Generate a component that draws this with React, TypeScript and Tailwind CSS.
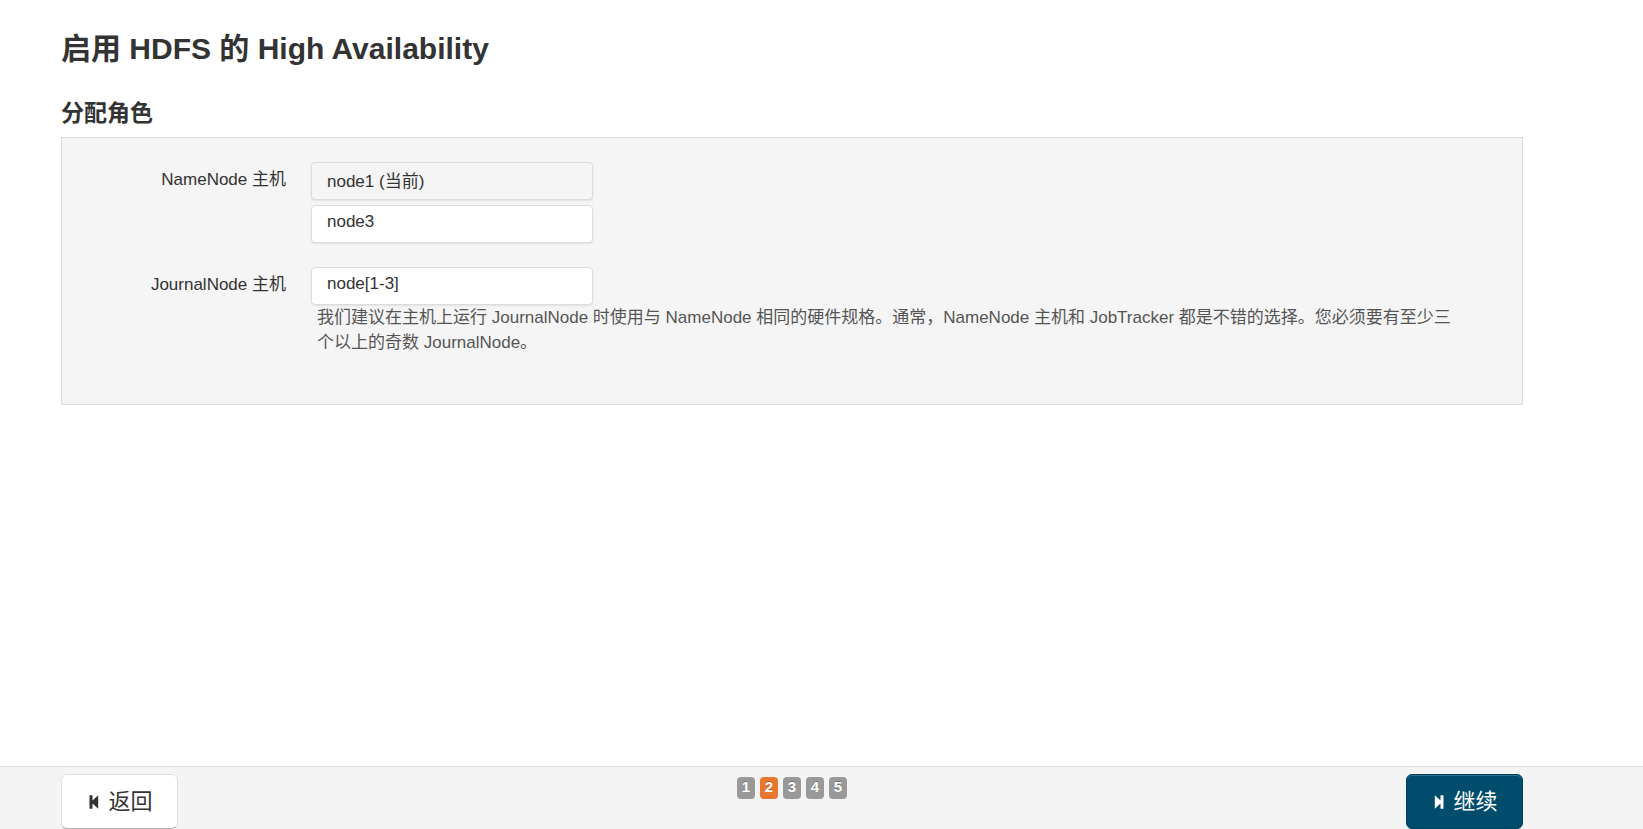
const STEPS = [1, 2, 3, 4, 5];
const CURRENT_STEP = 2;

const FIELD =
  'block h-[38px] w-[282px] max-w-full rounded-[4px] border border-[#dcdcdc] px-[15px] pb-1 text-[17px] text-[#333] shadow-[0_1px_2px_rgba(0,0,0,0.08)] outline-none';

function StepBackwardIcon() {
  return (
    <svg className="h-4 w-[10px] shrink-0" viewBox="0 0 10 16" fill="currentColor" aria-hidden="true">
      <path d="M0.5 1.2h3v5.2L9.2 1.2v13.6L3.5 9.6v5.2h-3z" />
    </svg>
  );
}

function StepForwardIcon() {
  return (
    <svg className="h-4 w-[10px] shrink-0" viewBox="0 0 10 16" fill="currentColor" aria-hidden="true">
      <path d="M9.5 1.2h-3v5.2L0.8 1.2v13.6l5.7-5.2v5.2h3z" />
    </svg>
  );
}

export default function App() {
  return (
    <div className="flex min-h-screen flex-col bg-white font-['Liberation_Sans','Noto_Sans_CJK_SC',sans-serif] text-[17px] text-[#333]">
      <main className="pl-[61px] pr-[120px] pt-[29px]">
        <h1 className="text-[30px] font-bold leading-[40px]">启用 HDFS 的 High Availability</h1>
        <h2 className="mt-[28px] text-[23px] font-bold leading-[32px]">分配角色</h2>

        <form
          id="roles"
          className="mt-[8px] flex flex-col gap-[24px] border border-[#dcdcdc] bg-[#f5f5f5] pb-[49px] pt-[24px]"
        >
          <div className="flex gap-[25px]">
            <label htmlFor="namenode-current" className="w-[224px] shrink-0 pt-[5px] text-right leading-[25px]">
              NameNode 主机
            </label>
            <div className="flex min-w-0 flex-1 flex-col gap-[5px]">
              <input id="namenode-current" className={`${FIELD} bg-[#f5f5f5]`} defaultValue="node1 (当前)" readOnly />
              <input
                id="namenode-standby"
                aria-label="NameNode 主机"
                className={`${FIELD} bg-white`}
                defaultValue="node3"
              />
            </div>
          </div>

          <div className="flex gap-[25px]">
            <label htmlFor="journalnode" className="w-[224px] shrink-0 pt-[5px] text-right leading-[25px]">
              JournalNode 主机
            </label>
            <div className="min-w-0 flex-1">
              <input id="journalnode" className={`${FIELD} bg-white`} defaultValue="node[1-3]" />
              <p className="pl-[6px] pr-[58px] leading-[25px] text-[#555]">
                我们建议在主机上运行 JournalNode 时使用与 NameNode 相同的硬件规格。通常，NameNode 主机和 JobTracker
                都是不错的选择。您必须要有至少三个以上的奇数 JournalNode。
              </p>
            </div>
          </div>
        </form>
      </main>

      <footer className="mt-auto flex items-start justify-between border-t border-[#dcdcdc] bg-[#f4f4f4] pl-[61px] pr-[120px] pt-[7px]">
        <button
          type="button"
          className="flex h-[55px] w-[117px] items-center justify-center gap-[9px] rounded-[6px] border border-[#e0e0e0] border-b-[#b0b0b0] bg-white pl-[3px] text-[22px] leading-[30px]"
        >
          <StepBackwardIcon />
          返回
        </button>

        <ol className="flex gap-[5px] pt-[3px]">
          {STEPS.map((step) => (
            <li
              key={step}
              aria-current={step === CURRENT_STEP ? 'step' : undefined}
              className={`h-[22px] w-[18px] rounded-[4px] text-center text-[15px] font-bold leading-[20px] text-white [text-shadow:0_-1px_0_rgba(0,0,0,0.25)] ${
                step === CURRENT_STEP ? 'bg-[#e7762e]' : 'bg-[#999]'
              }`}
            >
              {step}
            </li>
          ))}
        </ol>

        <button
          type="submit"
          form="roles"
          className="flex h-[55px] w-[117px] items-center justify-center gap-[9px] rounded-[6px] border border-[#00405f] bg-[#004c6d] pl-[3px] text-[22px] leading-[30px] text-white shadow-[inset_0_1px_0_rgba(255,255,255,0.2)]"
        >
          <StepForwardIcon />
          继续
        </button>
      </footer>
    </div>
  );
}
